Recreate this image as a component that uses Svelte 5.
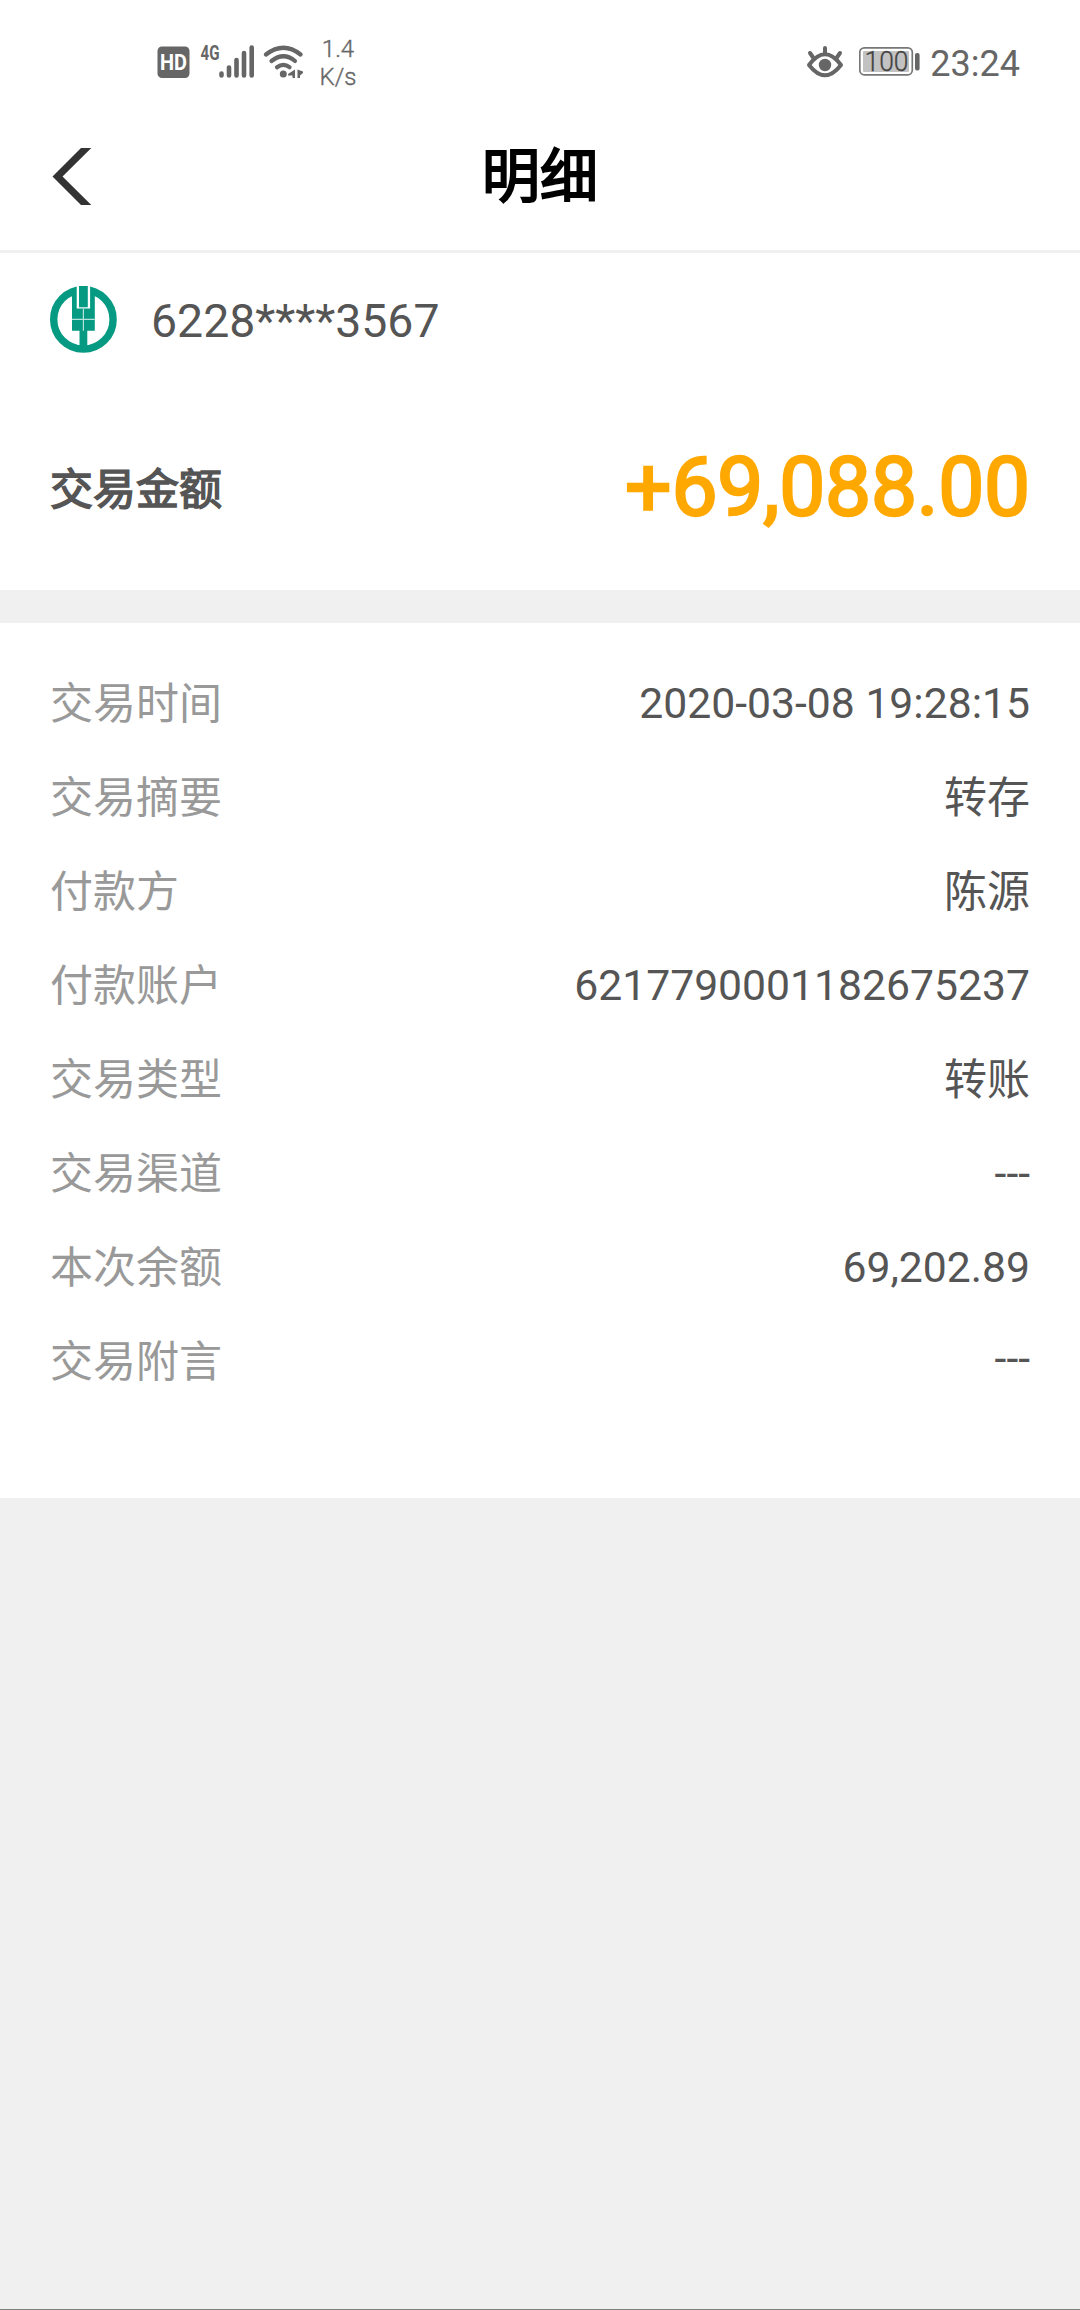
<script>
  const rows = [
    { label: '交易时间', value: '2020-03-08 19:28:15' },
    { label: '交易摘要', value: '转存' },
    { label: '付款方', value: '陈源' },
    { label: '付款账户', value: '6217790001182675237' },
    { label: '交易类型', value: '转账' },
    { label: '交易渠道', value: '---' },
    { label: '本次余额', value: '69,202.89' },
    { label: '交易附言', value: '---', raised: true }
  ];
  const isCjk = (text) => /[\u4e00-\u9fff]/.test(text);
</script>

<div class="screen">
  <header class="status">
    <div class="left">
      <svg class="signals" width="152" height="40" viewBox="156 42 152 40">
        <rect x="157.500" y="46.500" width="32" height="31.500" rx="4.500" fill="#666" />
        <text x="160" y="70" class="hd" textLength="27" lengthAdjust="spacingAndGlyphs">HD</text>
        <text x="200.500" y="59.700" class="net" textLength="19" lengthAdjust="spacingAndGlyphs">4G</text>
        <g stroke="#666" stroke-width="4.600" stroke-linecap="round">
          <path d="M221.500 73.500V75.500M229 67.500V75.500M236.500 60V75.500M244 53V75.500M251.700 47.500V75.500" />
        </g>
        <g stroke="#666" stroke-width="4.200" fill="none" stroke-linecap="round">
          <path d="M266 54.500Q283.500 41 300.500 54.500" />
          <path d="M271.500 61Q283.500 51.500 295 61" />
          <path d="M277 67.200Q283.500 62.500 289.500 67.200" />
        </g>
        <circle cx="283.300" cy="74" r="3.500" fill="#666" />
        <path d="M295 69.500v8.500h-2.500v-2.500h-4.500v-1.500zM297.500 69.500l5.500 2v1.500l-3 2.500v2.500h-2.500z" fill="#666" />
      </svg>
      <div class="speed"><span>1.4</span><span>K/s</span></div>
    </div>
    <div class="right">
      <svg width="38" height="36" viewBox="807 44 38 36">
        <g fill="none" stroke="#666" stroke-width="4" stroke-linecap="round" stroke-linejoin="round">
          <path d="M810 65Q826 43.500 842 65Q826 85.500 810 65Z" />
          <path d="M826 48V54M811 53L814.500 58M841 53L837.500 58" />
        </g>
        <circle cx="826" cy="65" r="6.200" fill="#666" />
      </svg>
      <svg width="62" height="32" viewBox="860 46 62 32">
        <rect x="860.800" y="47.800" width="52.500" height="27" rx="4.500" fill="#fff" stroke="#777" stroke-width="1.700" />
        <rect x="864" y="51" width="46" height="21" rx="1" fill="#c2c2c2" />
        <text x="865.500" y="71" class="bat" textLength="44" lengthAdjust="spacingAndGlyphs">100</text>
        <rect x="916" y="53" width="4.600" height="17.500" rx="2" fill="#666" />
      </svg>
      <span class="clock">23:24</span>
    </div>
  </header>

  <nav class="bar">
    <svg width="42" height="58" viewBox="52.500 147 42 58">
      <path d="M81.500 148H91.800L63 176.500L91.800 205H81.500L53 176.500Z" fill="#333" />
    </svg>
    <h1>明细</h1>
    <i></i>
  </nav>

  <section class="summary">
    <div class="card">
      <svg width="68" height="68" viewBox="0 0 68 68">
        <circle cx="33.400" cy="33.400" r="29.700" fill="none" stroke="#069a82" stroke-width="7.400" />
        <path d="M22 2.500L27.300 1V22H39.500V1L44.800 2.500V44.700H37.300V66H29.500V44.700H22Z" fill="#069a82" />
        <path d="M26.700 0H40.100V22.500H26.700Z" fill="#fff" />
        <path d="M29 0H37.800V21.300H29Z" fill="#069a82" />
        <path d="M22 33.400H44.800M33.400 22.800V44.700" stroke="#b5e2da" stroke-width="1.200" />
      </svg>
      <span>6228****3567</span>
    </div>
    <div class="amount">
      <b>交易金额</b>
      <strong>+69,088.00</strong>
    </div>
  </section>

  <section class="details">
    {#each rows as row}
      <div class="row">
        <span class="label">{row.label}</span>
        <span class="value" class:raised={row.raised} class:cjk={isCjk(row.value)}>{row.value}</span>
      </div>
    {/each}
  </section>
</div>

<style>
  :global(body) { margin: 0; background: #f0f0f0; }
  .screen {
    box-sizing: border-box;
    width: 1080px;
    height: 2310px;
    background: #f0f0f0;
    border-bottom: 1px solid #808080;
    font-family: Roboto, "Noto Sans CJK SC", sans-serif;
    color: #555;
  }
  .status {
    box-sizing: border-box;
    height: 102px;
    padding: 0 60px 0 156px;
    display: flex;
    justify-content: space-between;
    background: #fff;
    color: #666;
  }
  .left, .right { display: flex; align-items: flex-start; }
  .signals { margin-top: 42px; }
  .hd { font: 700 22.500px Roboto, sans-serif; fill: #fff; }
  .net { font: 700 20px Roboto, sans-serif; fill: #666; }
  .bat { font: 300 27px Roboto, sans-serif; fill: #444; stroke: #444; stroke-width: 0.300px; }
  .speed {
    display: flex;
    flex-direction: column;
    align-items: center;
    width: 60px;
    padding-top: 35px;
    font-size: 24px;
    font-weight: 300;
    line-height: 28px;
    -webkit-text-stroke: 0.350px #666;
  }
  .right svg:first-child { margin-top: 44px; }
  .right svg + svg { margin: 46px 9px 0 15px; }
  .clock { font-size: 36px; line-height: 42px; margin-top: 43px; }
  .bar {
    height: 148px;
    padding: 0 52px;
    display: flex;
    justify-content: space-between;
    align-items: center;
    background: #fff;
    border-bottom: 3px solid #f0f0f0;
  }
  .bar i { width: 42px; }
  h1 {
    margin: 0;
    padding-top: 2px;
    font-size: 58px;
    font-weight: 400;
    line-height: 80px;
    color: #000;
    -webkit-text-stroke: 2px #000;
  }
  .summary { height: 337px; background: #fff; }
  .card {
    display: flex;
    align-items: center;
    gap: 33px;
    padding: 33px 50px 0;
    height: 68px;
    font-size: 46.400px;
  }
  .card span { padding-top: 2px; }
  .amount {
    display: flex;
    justify-content: space-between;
    align-items: center;
    height: 110px;
    padding: 78px 50px 0;
  }
  .amount b {
    padding-bottom: 2px;
    font-size: 43px;
    font-weight: 400;
    -webkit-text-stroke: 1.500px #555;
  }
  .amount strong {
    font-size: 82px;
    letter-spacing: -0.200px;
    font-weight: 400;
    color: #ffa800;
    -webkit-text-stroke: 2.400px #ffa800;
  }
  .details {
    box-sizing: border-box;
    height: 875px;
    margin-top: 33px;
    padding: 33px 50px 0;
    background: #fff;
  }
  .row {
    display: flex;
    justify-content: space-between;
    align-items: center;
    height: 94px;
    font-size: 42.700px;
    line-height: 60px;
  }
  .label { color: #999; padding-top: 2px; font-size: 43px; }
  .cjk { padding-top: 2px; font-size: 43px; }
  .raised { margin-bottom: 6px; }
</style>
